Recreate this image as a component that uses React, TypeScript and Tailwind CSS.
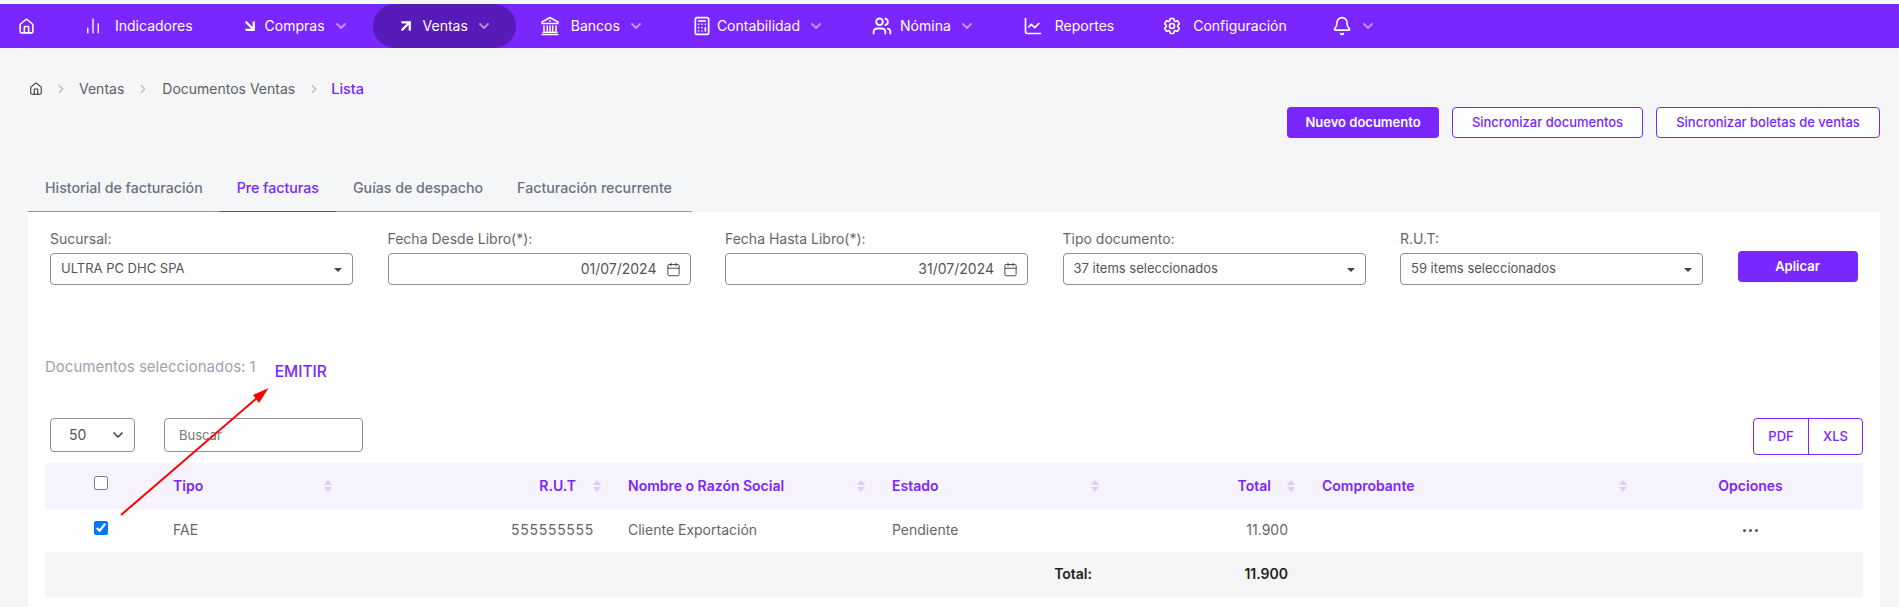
import React from 'react';
import {
  House,
  ChartNoAxesColumn,
  ArrowDownRight,
  ArrowUpRight,
  Calculator,
  Users,
  ChartLine,
  Bell,
  ChevronDown,
  ChevronRight,
  Calendar,
} from 'lucide-react';
import { HiOutlineCog6Tooth } from 'react-icons/hi2';

function BankIcon({ className }: { className?: string }) {
  return (
    <svg viewBox="0 0 20 20" className={className} fill="none" stroke="currentColor" strokeWidth="1.5">
      <path d="M10 1.5 2 6v1.5h16V6z" />
      <circle cx="10" cy="5" r="0.9" fill="currentColor" stroke="none" />
      <path d="M4 9.5v6M7.3 9.5v6M10 9.5v6M12.7 9.5v6M16 9.5v6" />
      <path d="M2.5 16.2h15M1.5 18.5h17" />
    </svg>
  );
}

function NavChevron() {
  return <ChevronDown className="w-4 h-4 text-white/50" strokeWidth={3} />;
}

function SortIcon() {
  return (
    <span className="flex flex-col gap-[2px] shrink-0">
      <span className="w-0 h-0 border-x-[4px] border-x-transparent border-b-[5px] border-b-[#dccbff]" />
      <span className="w-0 h-0 border-x-[4px] border-x-transparent border-t-[5px] border-t-[#dccbff]" />
    </span>
  );
}

function NavItem({
  icon,
  label,
  gap,
  chevron,
  active,
}: {
  icon: React.ReactNode;
  label: string;
  gap: string;
  chevron?: boolean;
  active?: boolean;
}) {
  return (
    <div className={`flex items-center h-full px-6 ${gap} ${active ? 'bg-[#561bb8] rounded-full' : ''}`}>
      {icon}
      <div className="flex items-center gap-2">
        <span className="text-sm text-white">{label}</span>
        {chevron && <NavChevron />}
      </div>
    </div>
  );
}

function SelectField({ label, value }: { label: string; value: string }) {
  return (
    <div>
      <div className="text-sm leading-5 text-[#666]">{label}</div>
      <div className="mt-1 h-8 px-[10px] flex items-center justify-between bg-white border border-[#8f8f8f] rounded text-[13px] text-[#555]">
        <span>{value}</span>
        <span className="w-0 h-0 mt-[2px] border-x-[4px] border-x-transparent border-t-[4px] border-t-[#444]" />
      </div>
    </div>
  );
}

function DateField({ label, value }: { label: string; value: string }) {
  return (
    <div>
      <div className="text-sm leading-5 text-[#666]">{label}</div>
      <div className="mt-1 h-8 pr-[9px] flex items-center justify-end gap-[9px] bg-white border border-[#8f8f8f] rounded text-sm text-[#555]">
        <span>{value}</span>
        <Calendar className="w-[15px] h-[15px] text-[#444]" strokeWidth={1.5} />
      </div>
    </div>
  );
}

export default function App() {
  return (
    <div className="relative h-screen overflow-hidden flex flex-col bg-[#f5f6f8] font-['Inter',sans-serif]">
      {/* Top nav */}
      <nav className="mt-1 h-11 shrink-0 flex items-center bg-[#7a26ff]">
        <div className="w-[60px] pl-[18px]">
          <House className="w-[17px] h-[17px] text-white" strokeWidth={2.2} />
        </div>
        <NavItem icon={<ChartNoAxesColumn className="w-[18px] h-[18px] text-white" strokeWidth={1.8} />} label="Indicadores" gap="gap-[13px]" />
        <NavItem icon={<ArrowDownRight className="w-[18px] h-[18px] text-white" strokeWidth={3} />} label="Compras" gap="gap-[6px]" chevron />
        <NavItem icon={<ArrowUpRight className="w-[18px] h-[18px] text-white" strokeWidth={3} />} label="Ventas" gap="gap-2" chevron active />
        <NavItem icon={<BankIcon className="w-5 h-5 text-white" />} label="Bancos" gap="gap-[11px]" chevron />
        <NavItem icon={<Calculator className="w-5 h-5 text-white" strokeWidth={2} />} label="Contabilidad" gap="gap-[5px]" chevron />
        <NavItem icon={<Users className="w-5 h-5 text-white" strokeWidth={2.2} />} label="Nómina" gap="gap-2" chevron />
        <NavItem icon={<ChartLine className="w-5 h-5 text-white" strokeWidth={2} />} label="Reportes" gap="gap-3" />
        <NavItem icon={<HiOutlineCog6Tooth className="w-5 h-5 text-white" strokeWidth={2} />} label="Configuración" gap="gap-[11px]" />
        <div className="flex items-center gap-2 pl-[21px]">
          <Bell className="w-5 h-5 text-white" strokeWidth={2} />
          <NavChevron />
        </div>
      </nav>

      {/* Breadcrumb */}
      <div className="mt-[31px] ml-[29px] h-5 flex items-center text-sm text-[#5f5f5f]">
        <House className="w-[14px] h-[14px] text-[#333]" strokeWidth={1.8} />
        <ChevronRight className="w-[14px] h-[14px] mx-[11px] text-[#bbb]" />
        <span>Ventas</span>
        <ChevronRight className="w-[14px] h-[14px] mx-[12px] text-[#bbb]" />
        <span>Documentos Ventas</span>
        <ChevronRight className="w-[14px] h-[14px] ml-[12px] mr-[10px] text-[#bbb]" />
        <span className="text-[14.5px] font-medium text-[#7a26ff]">Lista</span>
      </div>

      {/* Actions */}
      <div className="mt-2 pr-[19px] flex justify-end gap-[13px] text-[13px] font-medium">
        <button className="w-[152px] h-[31px] rounded bg-[#7a26ff] text-white font-semibold">Nuevo documento</button>
        <button className="w-[191px] h-[31px] rounded bg-white border border-[#7a26ff] text-[#7a26ff]">Sincronizar documentos</button>
        <button className="w-[224px] h-[31px] rounded bg-white border border-[#7a26ff] text-[#7a26ff]">Sincronizar boletas de ventas</button>
      </div>

      {/* Tabs */}
      <div className="mt-[27px] ml-[28px] w-[664px] h-[47px] flex border-b border-[#999] text-[14.2px] whitespace-nowrap text-[#6b7280]">
        <div className="px-[17px] pt-3 font-medium">Historial de facturación</div>
        <div className="px-[17px] pt-3 h-[47px] font-medium text-[#7a26ff] border-b border-[#7a26ff]">Pre facturas</div>
        <div className="px-[17px] pt-3 font-medium">Guías de despacho</div>
        <div className="px-[17px] pt-3 font-medium">Facturación recurrente</div>
      </div>

      {/* Panel */}
      <div className="ml-[28px] w-[1852px] flex-1 bg-white px-[17px]">
        <div className="mt-[17px] pl-[5px] grid grid-cols-[repeat(5,303px)_120px] gap-x-[34.5px]">
          <SelectField label="Sucursal:" value="ULTRA PC DHC SPA" />
          <DateField label="Fecha Desde Libro(*):" value="01/07/2024" />
          <DateField label="Fecha Hasta Libro(*):" value="31/07/2024" />
          <SelectField label="Tipo documento:" value="37 items seleccionados" />
          <SelectField label="R.U.T:" value="59 items seleccionados" />
          <button className="mt-[22px] h-[31px] rounded bg-[#7a26ff] text-white text-[13px] font-semibold">Aplicar</button>
        </div>

        <div className="mt-[72px] flex items-start">
          <span className="text-[15px] leading-5 text-[#9ca3af]">Documentos seleccionados: 1</span>
          <span className="ml-[19px] mt-[5px] text-[15.5px] leading-5 font-medium text-[#7a26ff]">EMITIR</span>
        </div>

        <div className="mt-[36px] flex justify-between">
          <div className="pl-[5px] flex gap-[29px]">
            <div className="w-[85px] h-[34px] pl-[18px] pr-[8px] flex items-center justify-between border border-[#8f8f8f] rounded text-sm text-[#555]">
              <span>50</span>
              <ChevronDown className="w-4 h-4 text-[#444]" strokeWidth={2.5} />
            </div>
            <input
              placeholder="Buscar"
              className="w-[199px] h-[34px] px-[14px] border border-[#8f8f8f] rounded text-[13px] outline-none placeholder:text-[#777]"
            />
          </div>
          <div className="w-[110px] h-[37px] flex border border-[#7a26ff] rounded text-[13px] font-medium text-[#7a26ff]">
            <div className="w-[55px] flex items-center justify-center border-r border-[#7a26ff]">PDF</div>
            <div className="flex-1 flex items-center justify-center">XLS</div>
          </div>
        </div>

        {/* Table */}
        <table className="mt-2 w-[1818px] table-fixed text-sm">
          <colgroup>
            <col className="w-[111px]" />
            <col className="w-[189px]" />
            <col className="w-[266px]" />
            <col className="w-[264px]" />
            <col className="w-[235px]" />
            <col className="w-[195px]" />
            <col className="w-[333px]" />
            <col className="w-[225px]" />
          </colgroup>
          <thead>
            <tr className="h-[46px] bg-[#f6f3fd] text-[#7a26ff] font-semibold">
              <th className="align-middle">
                <input type="checkbox" className="block mx-auto -mt-[6px] w-[14px] h-[14px]" />
              </th>
              <th className="pl-[17px] pr-[13px] font-semibold">
                <div className="flex items-center justify-between"><span>Tipo</span><SortIcon /></div>
              </th>
              <th className="pl-[17px] pr-[10px] font-semibold">
                <div className="flex items-center justify-end gap-[17px]"><span>R.U.T</span><SortIcon /></div>
              </th>
              <th className="pl-[17px] pr-[10px] font-semibold">
                <div className="flex items-center justify-between"><span>Nombre o Razón Social</span><SortIcon /></div>
              </th>
              <th className="pl-[17px] pr-[11px] font-semibold">
                <div className="flex items-center justify-between"><span>Estado</span><SortIcon /></div>
              </th>
              <th className="pl-[17px] pr-[10px] font-semibold">
                <div className="flex items-center justify-end gap-4"><span>Total</span><SortIcon /></div>
              </th>
              <th className="pl-[17px] pr-[11px] font-semibold">
                <div className="flex items-center justify-between"><span>Comprobante</span><SortIcon /></div>
              </th>
              <th className="text-center font-semibold">Opciones</th>
            </tr>
          </thead>
          <tbody>
            <tr className="h-[43px] text-[#666]">
              <td>
                <input type="checkbox" defaultChecked className="block mx-auto -mt-[6px] w-[14px] h-[14px]" />
              </td>
              <td className="pl-[17px] pb-px">FAE</td>
              <td className="pr-[17px] pb-px text-right tracking-[0.7px]">555555555</td>
              <td className="pl-[17px] pb-px">Cliente Exportación</td>
              <td className="pl-[17px] pb-px">Pendiente</td>
              <td className="pr-[17px] pb-px text-right">11.900</td>
              <td />
              <td>
                <div className="flex justify-center gap-[3px]">
                  <span className="w-[3px] h-[3px] rounded-full bg-[#555]" />
                  <span className="w-[3px] h-[3px] rounded-full bg-[#555]" />
                  <span className="w-[3px] h-[3px] rounded-full bg-[#555]" />
                </div>
              </td>
            </tr>
            <tr className="h-[45px] bg-[#f5f5f5] text-[#222] font-semibold">
              <td colSpan={4} />
              <td className="pr-[18px] pb-px text-right">Total:</td>
              <td className="pr-[17px] pb-px text-right">11.900</td>
              <td colSpan={2} />
            </tr>
          </tbody>
        </table>
      </div>

      {/* Red annotation arrow */}
      <svg className="absolute inset-0 w-full h-full pointer-events-none" viewBox="0 0 1899 607">
        <path d="M121 515 258 397" stroke="#f00" strokeWidth="2" fill="none" />
        <path d="M268.6 388 253 395 259 403z" fill="#f00" />
      </svg>
    </div>
  );
}
